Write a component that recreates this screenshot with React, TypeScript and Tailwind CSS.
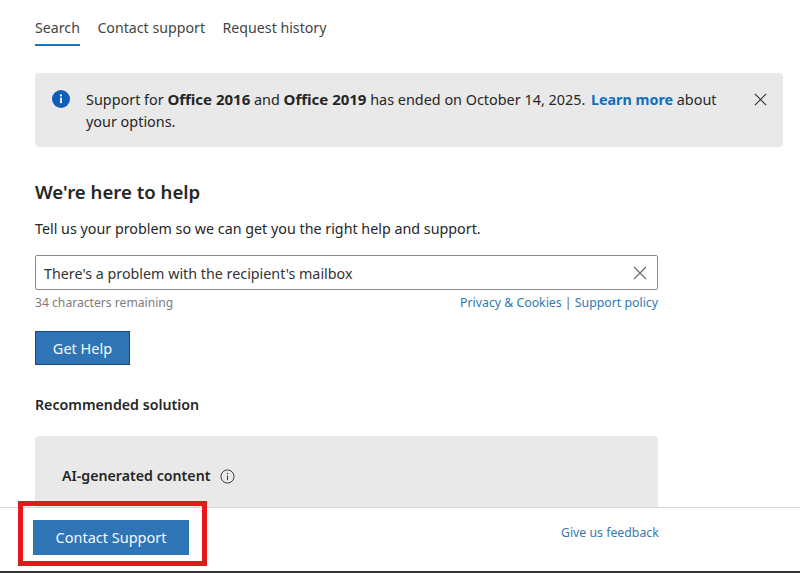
const tabs = ["Search", "Contact support", "Request history"];

function CloseIcon({ className, weight }: { className: string; weight: number }) {
  return (
    <svg viewBox="0 0 14 14" className={className} fill="none" stroke="currentColor" strokeWidth={weight}>
      <path d="M1 1l12 12M13 1L1 13" />
    </svg>
  );
}

export default function App() {
  return (
    <div className="relative flex h-[573px] w-[800px] flex-col overflow-hidden bg-white font-['Noto_Sans',sans-serif] text-[14.3px] text-[#262626]">
      <main className="min-h-0 flex-1 overflow-hidden pl-[35px] pr-[17px]">
        <nav className="flex gap-[17.5px] pt-[17px] text-[14.2px] text-[#444]">
          {tabs.map((tab, i) => (
            <div
              key={tab}
              className={
                i === 0
                  ? "h-[29px] border-b-2 border-[#1b76bd] leading-[21px]"
                  : "h-[29px] leading-[21px]"
              }
            >
              {tab}
            </div>
          ))}
        </nav>

        <div className="mt-[27px] flex h-[74px] rounded-[4px] bg-[#e9e9e9] pl-[17px] pr-[16px] pt-[16px] text-[14.4px]">
          <svg viewBox="0 0 18 18" className="mt-[1px] h-[18px] w-[18px] shrink-0">
            <circle cx="9" cy="9" r="9" fill="#0f5fb8" />
            <rect x="8.1" y="7.6" width="1.8" height="5.6" fill="#fff" />
            <circle cx="9" cy="5.4" r="1.1" fill="#fff" />
          </svg>
          <p className="ml-[16px] w-[645px] leading-[22px]">
            Support for <b className="text-[15px] leading-[20px]">Office 2016</b> and <b className="text-[15px] leading-[20px]">Office 2019</b> has ended on October 14, 2025.{" "}
            <a className="ml-[2px] text-[14.3px] font-bold leading-[20px] text-[#106ebe]">Learn more</a> about your options.
          </p>
          <CloseIcon className="ml-auto mt-[4px] h-[13px] w-[13px] shrink-0 text-[#333]" weight={1.3} />
        </div>

        <h1 className="mt-[32px] text-[18.6px] font-semibold leading-[26px]">We're here to help</h1>
        <p className="mt-[13px] leading-[22px]">
          Tell us your problem so we can get you the right help and support.
        </p>

        <div className="mt-[15px] flex h-[35px] w-[623px] items-center justify-between rounded-[2px] border border-[#8a8a8a] pl-[8px] pr-[10px] text-[#333]">
          <span className="relative top-[1px]">There's a problem with the recipient's mailbox</span>
          <CloseIcon className="h-[14px] w-[14px] text-[#666]" weight={1.1} />
        </div>
        <div className="mt-[4px] flex w-[623px] justify-between text-[12.15px] leading-[18px]">
          <span className="text-[#7c7c7c]">34 characters remaining</span>
          <span className="text-[12.3px] text-[#666]">
            <a className="text-[#2f79b3]">Privacy &amp; Cookies</a> | <a className="text-[#2f79b3]">Support policy</a>
          </span>
        </div>

        <button className="mt-[19px] flex h-[34px] w-[95px] items-center justify-center border border-[#174b77] bg-[#2f75b5] pt-[1px] text-[14.5px] text-[#f3f9ff]">
          Get Help
        </button>

        <h2 className="mt-[29px] text-[14.2px] font-semibold leading-[22px]">Recommended solution</h2>

        <div className="mt-[20px] h-[120px] w-[623px] rounded-[4px] bg-[#e9e9e9] pl-[27px] pt-[29px]">
          <div className="flex items-center gap-[10px] text-[14.2px] font-semibold leading-[22px]">
            AI-generated content
            <svg viewBox="0 0 16 16" className="h-[15px] w-[15px] text-[#333]" fill="none" stroke="currentColor">
              <circle cx="8" cy="8" r="7" strokeWidth="1" />
              <path d="M8 7v4.6" strokeWidth="1.1" />
              <circle cx="8" cy="4.8" r="0.7" fill="currentColor" stroke="none" />
            </svg>
          </div>
        </div>
      </main>

      <footer className="flex h-[66px] shrink-0 border-t border-[#d6d6d6] border-b-2 border-b-[#333] bg-white pl-[33px]">
        <button className="mt-[12px] flex h-[35px] w-[156px] items-center justify-center bg-[#2f75b5] text-[14.5px] text-[#f3f9ff]">
          Contact Support
        </button>
        <a className="ml-[372px] mt-[14px] text-[12.3px] leading-[22px] text-[#3a78ab]">Give us feedback</a>
      </footer>

      <div className="absolute left-[18px] top-[501px] h-[65px] w-[189px] border-[5px] border-[#e8171c]" />
    </div>
  );
}
